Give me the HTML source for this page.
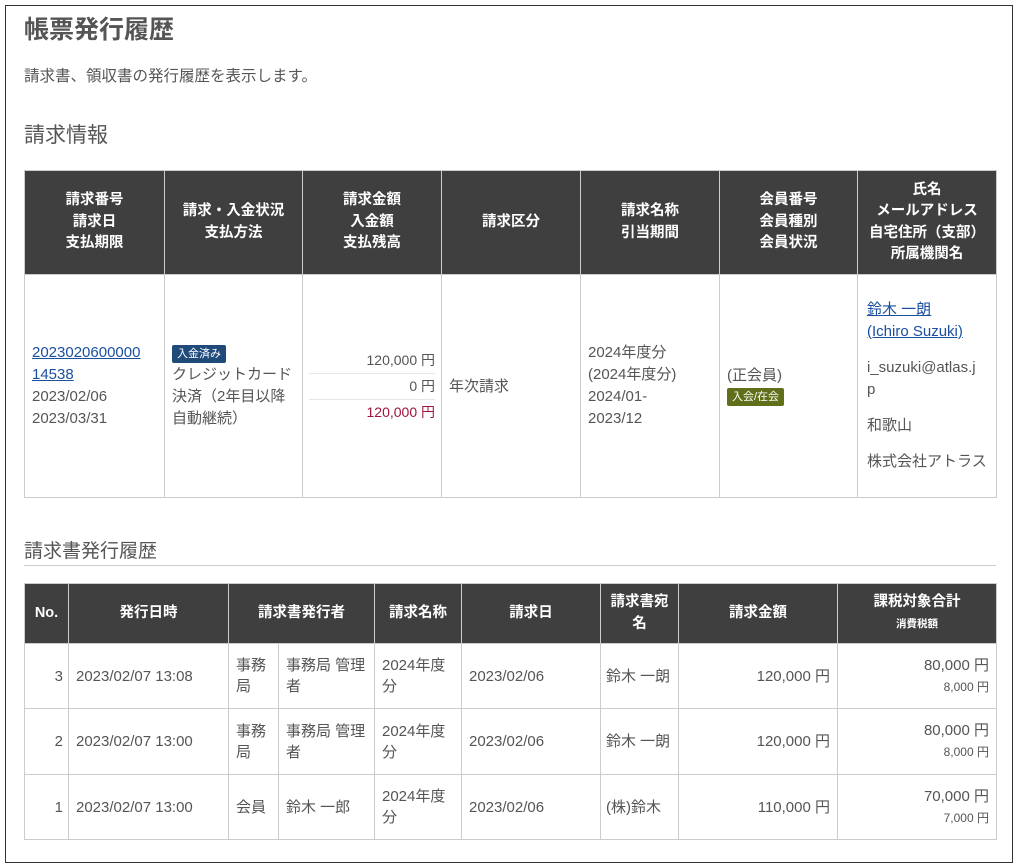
<!DOCTYPE html>
<html><head><meta charset="utf-8"><style>
*{box-sizing:border-box;margin:0;padding:0}
body{width:1017px;height:867px;background:#fff;font-family:"Liberation Sans","Noto Sans CJK JP",sans-serif;color:#555;font-size:15px;position:relative;overflow:hidden}
.frame{position:absolute;left:5px;top:5px;width:1008px;height:858px;border:1px solid #333}
.abs{position:absolute}
h1{position:absolute;left:24px;top:10px;font-size:25px;font-weight:bold;color:#555}
table{position:absolute;border-collapse:collapse;table-layout:fixed}
th{background:#3f3f3f;color:#fff;font-weight:bold;font-size:14.5px;border:1px solid #ccc;line-height:21.5px;text-align:center}
td{border:1px solid #ccc;vertical-align:middle;line-height:21px;padding:0 7px}
a{color:#1a4fa0;text-decoration:underline}
.badge{display:inline-block;color:#fff;font-size:11px;line-height:18px;padding:0 5px;border-radius:2px}
.r{text-align:right}
.nw{white-space:nowrap;padding:0 5px}
</style></head><body>
<div class="frame"></div>
<h1>帳票発行履歴</h1>
<div class="abs" style="left:24px;top:64px;font-size:15.5px">請求書、領収書の発行履歴を表示します。</div>
<div class="abs" style="left:24px;top:119px;font-size:21px">請求情報</div>
<table style="left:24px;top:170px;width:972px">
<colgroup><col style="width:140px"><col style="width:138px"><col style="width:139px"><col style="width:139px"><col style="width:139px"><col style="width:138px"><col style="width:139px"></colgroup>
<tr style="height:104px"><th>請求番号<br>請求日<br>支払期限</th><th>請求・入金状況<br>支払方法</th><th>請求金額<br>入金額<br>支払残高</th><th>請求区分</th><th>請求名称<br>引当期間</th><th>会員番号<br>会員種別<br>会員状況</th><th>氏名<br>メールアドレス<br>自宅住所（支部）<br>所属機関名</th></tr>
<tr style="height:223px">
<td style="line-height:22px"><a>2023020600000<br>14538</a><br>2023/02/06<br>2023/03/31</td>
<td style="line-height:22px"><span class="badge" style="background:#1f4a7a">入金済み</span><br>クレジットカード<br>決済（2年目以降<br>自動継続）</td>
<td class="r" style="padding:0 6px;font-size:14px"><div style="border-bottom:1px solid #e6e6e6;line-height:25px">120,000 円</div><div style="border-bottom:1px solid #e6e6e6;line-height:25px">0 円</div><div style="line-height:25px;color:#a0143c">120,000 円</div></td>
<td>年次請求</td>
<td style="line-height:22px">2024年度分<br>(2024年度分)<br>2024/01-<br>2023/12</td>
<td style="line-height:20px">(正会員)<br><span class="badge" style="background:#5f6f1a">入会/在会</span></td>
<td style="line-height:22px;padding:0 9px"><a>鈴木 一朗<br>(Ichiro Suzuki)</a><div style="margin-top:14px">i_suzuki@atlas.j<br>p</div><div style="margin-top:14px">和歌山</div><div style="margin-top:14px">株式会社アトラス</div></td>
</tr></table>
<div class="abs" style="left:24px;top:536px;font-size:19px">請求書発行履歴</div>
<div class="abs" style="left:24px;top:565px;width:972px;height:1px;background:#ccc"></div>
<table style="left:24px;top:583px;width:972px">
<colgroup><col style="width:44px"><col style="width:160px"><col style="width:50px"><col style="width:96px"><col style="width:87px"><col style="width:139px"><col style="width:78px"><col style="width:159px"><col style="width:159px"></colgroup>
<tr style="height:60px"><th>No.</th><th>発行日時</th><th colspan="2">請求書発行者</th><th>請求名称</th><th>請求日</th><th>請求書宛<br>名</th><th>請求金額</th><th>課税対象合計<br><span style="font-size:10.5px">消費税額</span></th></tr>
<tr style="height:65px"><td class="r" style="padding:0 5px">3</td><td>2023/02/07 13:08</td><td>事務<br>局</td><td>事務局 管理<br>者</td><td>2024年度<br>分</td><td>2023/02/06</td><td class="nw">鈴木 一朗</td><td class="r">120,000 円</td><td class="r">80,000 円<br><span style="font-size:12px">8,000 円</span></td></tr>
<tr style="height:66px"><td class="r" style="padding:0 5px">2</td><td>2023/02/07 13:00</td><td>事務<br>局</td><td>事務局 管理<br>者</td><td>2024年度<br>分</td><td>2023/02/06</td><td class="nw">鈴木 一朗</td><td class="r">120,000 円</td><td class="r">80,000 円<br><span style="font-size:12px">8,000 円</span></td></tr>
<tr style="height:65px"><td class="r" style="padding:0 5px">1</td><td>2023/02/07 13:00</td><td>会員</td><td>鈴木 一郎</td><td>2024年度<br>分</td><td>2023/02/06</td><td class="nw">(株)鈴木</td><td class="r">110,000 円</td><td class="r">70,000 円<br><span style="font-size:12px">7,000 円</span></td></tr>
</table>
</body></html>
